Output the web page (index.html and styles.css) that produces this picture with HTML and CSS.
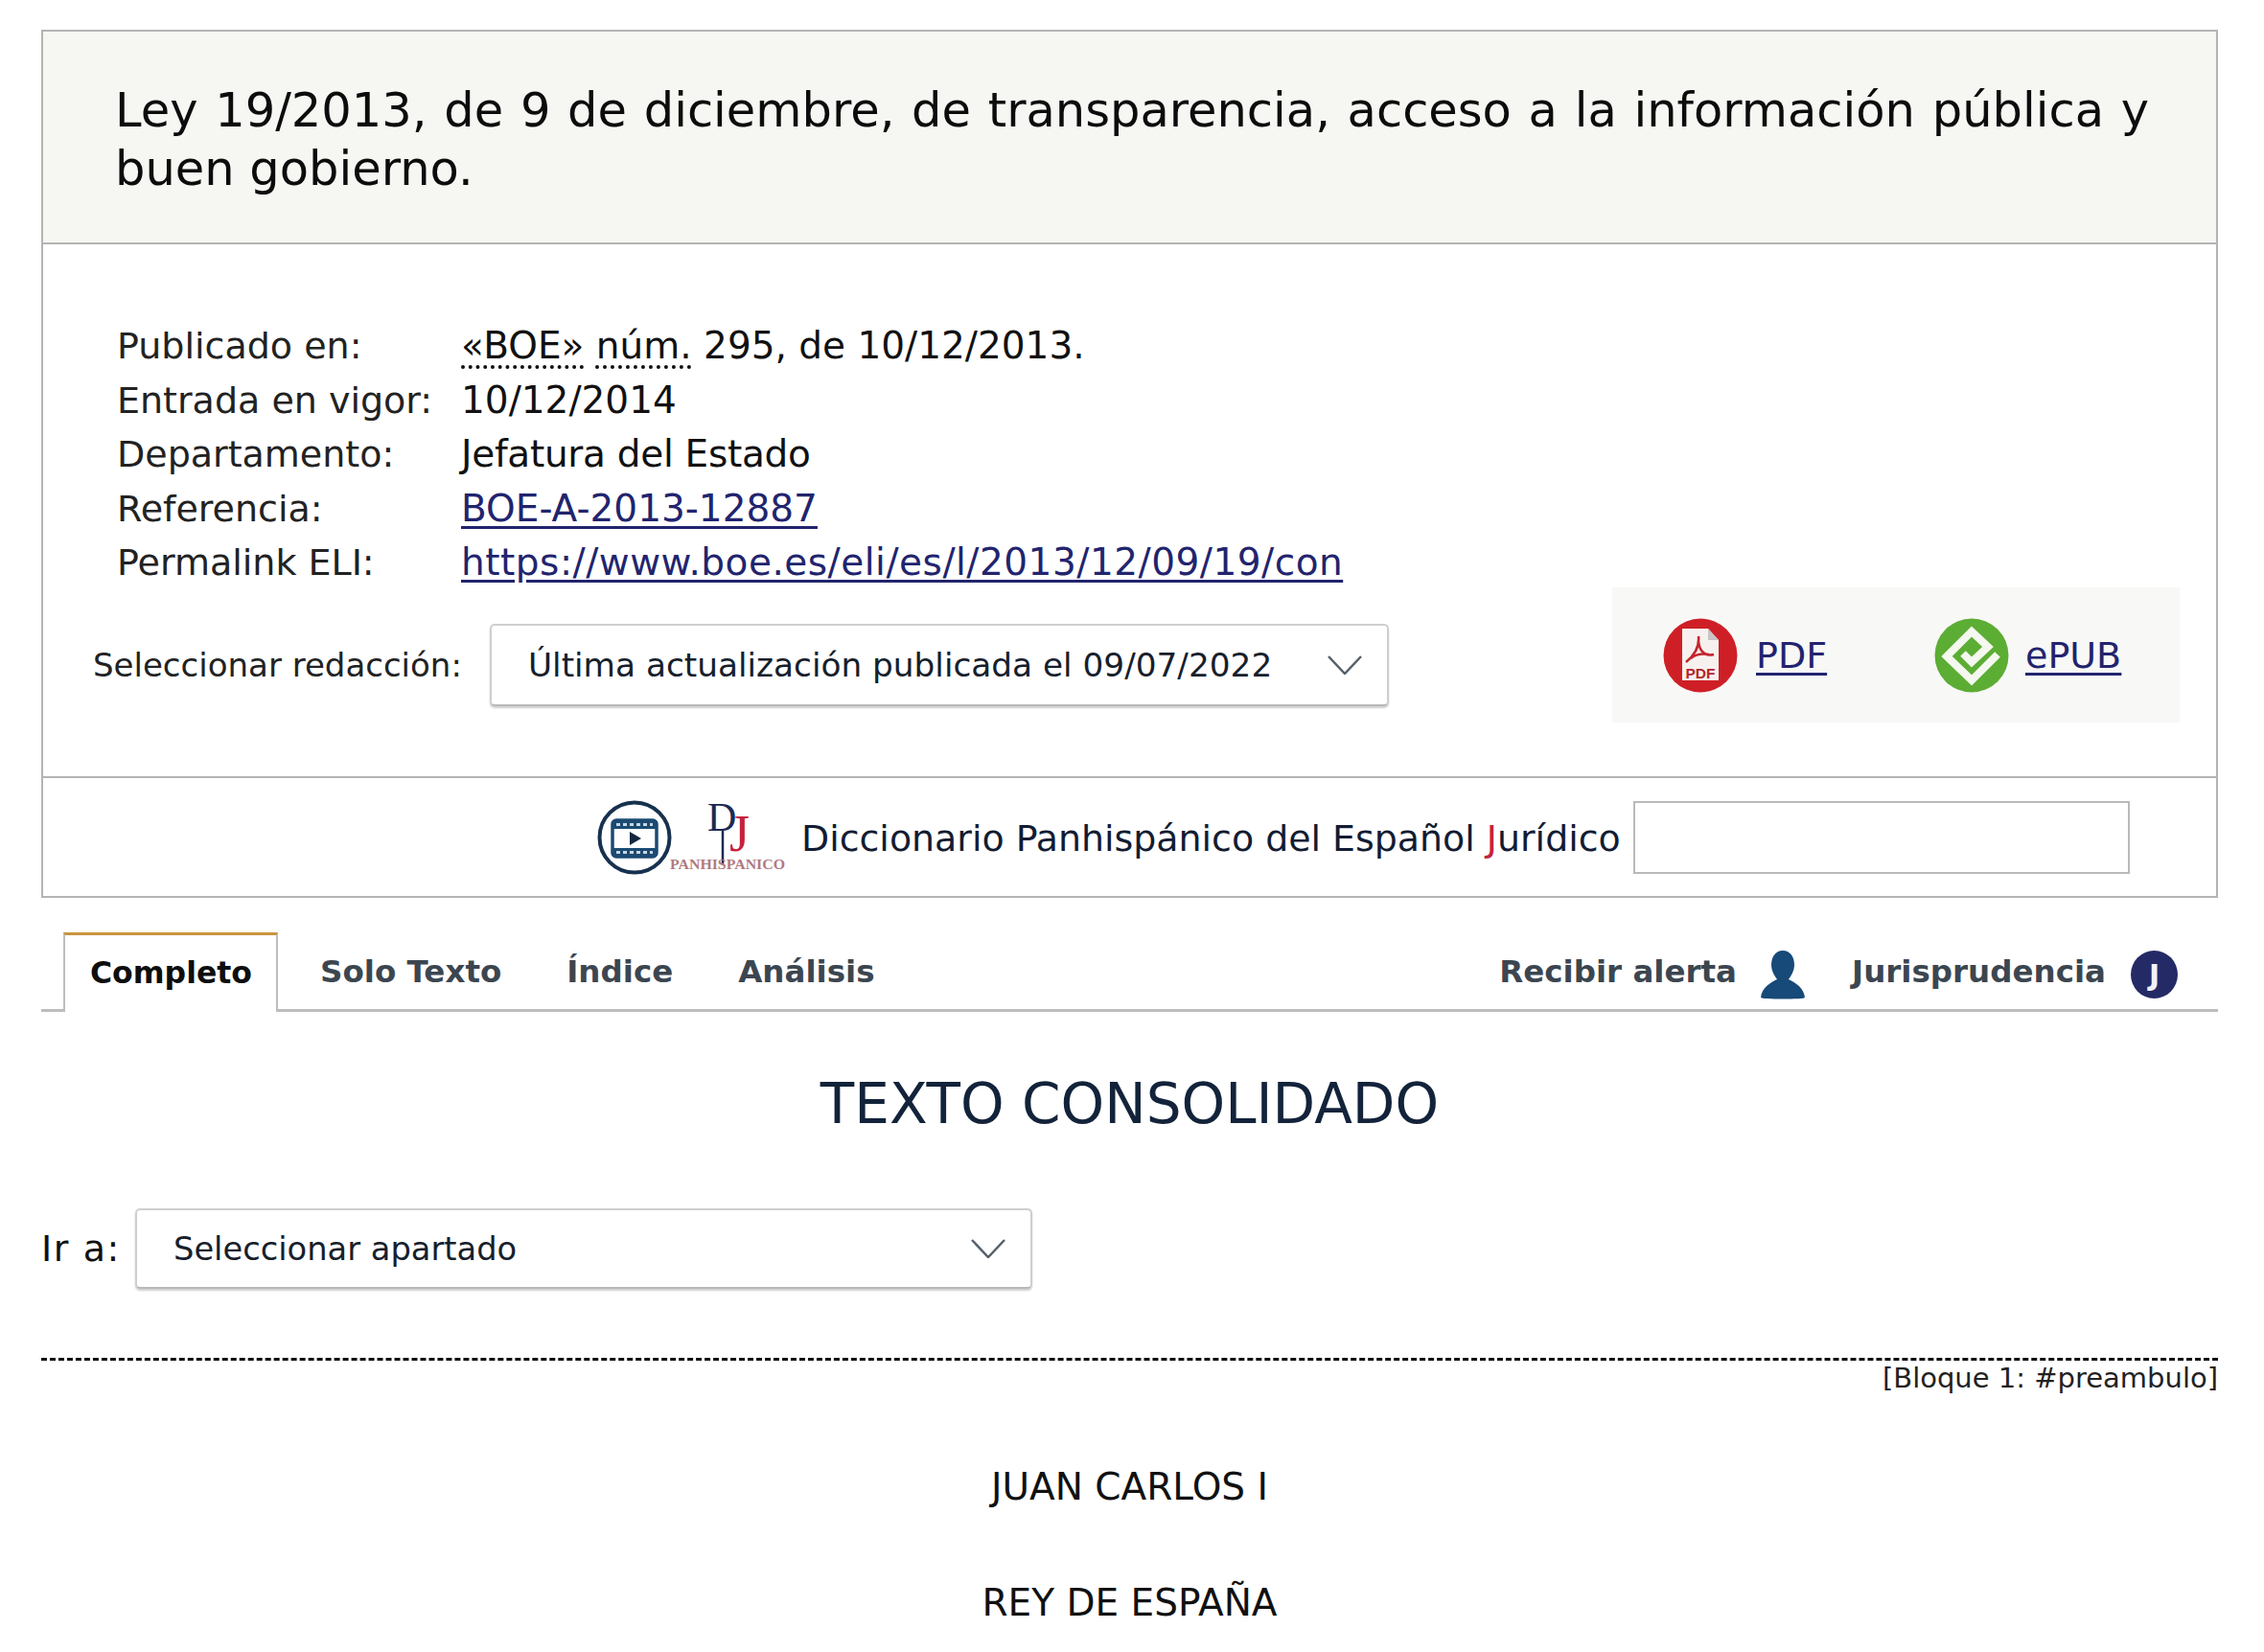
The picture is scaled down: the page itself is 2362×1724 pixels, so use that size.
FILE: index.html
```html
<!DOCTYPE html>
<html lang="es">
<head>
<meta charset="utf-8">
<title>Ley 19/2013</title>
<link rel="stylesheet" href="styles.css">
</head>
<body>
<main class="page">
  <section class="doc">
    <header class="doc-head">
      <h1 class="doc-title">Ley 19/2013, de 9 de diciembre, de transparencia, acceso a la información pública y buen gobierno.</h1>
    </header>
    <div class="doc-body">
      <dl class="meta">
        <dt>Publicado en:</dt><dd><abbr>«BOE»</abbr> <abbr>núm.</abbr> 295, de 10/12/2013.</dd>
        <dt>Entrada en vigor:</dt><dd>10/12/2014</dd>
        <dt>Departamento:</dt><dd class="tight">Jefatura del Estado</dd>
        <dt>Referencia:</dt><dd><a href="#">BOE-A-2013-12887</a></dd>
        <dt>Permalink ELI:</dt><dd><a class="url" href="#">https://www.boe.es/eli/es/l/2013/12/09/19/con</a></dd>
      </dl>
      <div class="version-row">
        <span class="version-label">Seleccionar redacción:</span>
        <div class="select select-version">
          <span>Última actualización publicada el 09/07/2022</span>
          <svg class="chev" viewBox="0 0 36 20"><path d="M1 1 L18 19 L35 1"/></svg>
        </div>
        <div class="downloads">
          <a class="dl dl-pdf" href="#">
            <svg class="dl-icon" viewBox="0 0 78 78">
              <circle cx="39" cy="39" r="38.500" fill="#cf1f26"/>
              <path d="M20 11 H47 L58 23 V65 H20 Z" fill="#f6f1ef"/>
              <path d="M47 11 V23 H58 Z" fill="#c9c4c4"/>
              <path d="M37 19 C38 28 34 38 24 46 M37 24 C38 36 45 40 53 38 M29 42 C35 37 42 37 48 38" fill="none" stroke="#c4242b" stroke-width="2.600"/>
              <text x="39" y="63" class="pdf-mark">PDF</text>
            </svg>
            <span>PDF</span>
          </a>
          <a class="dl dl-epub" href="#">
            <svg class="dl-icon" viewBox="0 0 78 78">
              <circle cx="39" cy="39" r="38.500" fill="#5cad33"/>
              <path d="M66 38 L39 65 L13 40 L39 14 L56 30 L39 46 L30 37" fill="none" stroke="#f4f8ef" stroke-width="8"/>
            </svg>
            <span>ePUB</span>
          </a>
        </div>
      </div>
    </div>
    <div class="dict">
      <svg class="video-icon" viewBox="0 0 78 78">
        <circle cx="39" cy="39" r="36.500" fill="none" stroke="#17324f" stroke-width="4"/>
        <rect x="16" y="21" width="46" height="38" rx="4" fill="none" stroke="#1b4a73" stroke-width="3.500"/>
        <rect x="16" y="21" width="46" height="9" fill="#1b4a73"/>
        <rect x="16" y="50" width="46" height="9" fill="#1b4a73"/>
        <path d="M20 25.500 H58 M20 54.500 H58" stroke="#c8d6e2" stroke-width="3" stroke-dasharray="4 3"/>
        <path d="M34 33 L46 40 L34 47 Z" fill="#14283f"/>
      </svg>
      <svg class="dpej" viewBox="0 0 124 78">
        <text x="39" y="32" class="dpej-d">D</text>
        <path d="M55 30 V66" stroke="#1c2a52" stroke-width="2.500"/>
        <text x="62" y="53" class="dpej-j">J</text>
        <text x="0" y="72" class="dpej-name" textLength="120" lengthAdjust="spacingAndGlyphs">PANHISPANICO</text>
      </svg>
      <span class="dict-label">Diccionario Panhispánico del Español <span class="red">J</span>urídico</span>
      <div class="dict-input"></div>
    </div>
  </section>

  <nav class="tabs">
    <a class="tab tab-on" href="#">Completo</a>
    <a class="tab" href="#">Solo Texto</a>
    <a class="tab" href="#">Índice</a>
    <a class="tab" href="#">Análisis</a>
    <div class="tab-tools">
      <a class="tool" href="#">Recibir alerta
        <svg class="tool-person" viewBox="0 0 48 52"><path d="M24 1 C32 1 36 8 36 16 C36 23 32 28 30 31 C38 35 46 40 47 50 C47 52 1 52 1 50 C2 40 10 35 18 31 C16 28 12 23 12 16 C12 8 16 1 24 1 Z" fill="#174a78"/></svg>
      </a>
      <a class="tool" href="#">Jurisprudencia
        <span class="tool-j">J</span>
      </a>
    </div>
  </nav>

  <h2 class="consol">TEXTO CONSOLIDADO</h2>

  <div class="goto">
    <span class="goto-label">Ir a:</span>
    <div class="select select-goto">
      <span>Seleccionar apartado</span>
      <svg class="chev" viewBox="0 0 36 20"><path d="M1 1 L18 19 L35 1"/></svg>
    </div>
  </div>

  <div class="block-rule">[Bloque 1: #preambulo]</div>
  <p class="center first">JUAN CARLOS I</p>
  <p class="center">REY DE ESPAÑA</p>
</main>
</body>
</html>
```
FILE: styles.css
```css
* { box-sizing: border-box; }
html, body { margin: 0; background: #fff; }
body { font-family: "DejaVu Sans", Verdana, sans-serif; color: #111; height: 1724px; overflow: hidden; }
a { color: #22246e; }
.page { padding: 31px 48px 0 43px; }

.doc { border: 2px solid #b4b4b4; }
.doc-head { height: 222px; background: #f6f6f3; border-bottom: 2px solid #b4b4b4; padding: 52px 70px 0 75px; }
.doc-title { margin: 0; font-size: 49.500px; line-height: 61px; font-weight: 400; color: #0c0c0c; text-align: justify; }

.doc-body { height: 557px; padding: 78px 38px 0 0; border-bottom: 2px solid #b4b4b4; }
.meta { margin: 0 0 0 77px; display: grid; grid-template-columns: 359px 1fr; font-size: 39px; line-height: 56.500px; align-items: baseline; }
.meta dt { color: #222; font-size: 38px; }
.meta dd { margin: 0; }
.meta .tight { letter-spacing: -0.300px; }
.meta abbr { text-decoration: underline dotted #111 4px; text-underline-offset: 7px; }
.meta a { text-underline-offset: 5px; }
.meta .url { letter-spacing: 0.500px; }

.version-row { display: flex; align-items: flex-start; margin-top: 20px; padding-left: 52px; }
.version-label { font-size: 34px; line-height: 86px; margin-top: 15px; width: 414px; color: #222; flex: none; }
.select { display: flex; align-items: center; justify-content: space-between; background: #fff; border: 2px solid #cfcfcf; border-bottom-color: #b9b9b9; border-radius: 5px; box-shadow: 0 2px 2px #cfcfcf; color: #16202c; }
.select-version { width: 938px; height: 86px; margin-top: 15px; padding: 0 26px 0 38px; flex: none; font-size: 34.300px; }
.chev { width: 36px; height: 20px; fill: none; stroke: #55606a; stroke-width: 2.500px; flex: none; }

.downloads { margin-left: auto; margin-top: -23px; width: 592px; height: 141px; background: #f8f8f7; display: flex; align-items: center; padding: 2px 0 0 53px; flex: none; }
.dl { display: flex; align-items: center; font-size: 38px; text-underline-offset: 5px; }
.dl-pdf { width: 283px; }
.dl-icon { width: 78px; height: 78px; margin-right: 19px; flex: none; }
.dl-epub .dl-icon { margin-right: 17px; }
.dl-icon + span { text-decoration: underline; }
.pdf-mark { font-family: "Liberation Sans", sans-serif; font-size: 15.500px; font-weight: 700; fill: #b3262d; text-anchor: middle; }

.dict { height: 123px; display: flex; align-items: center; padding-left: 578px; }
.video-icon { width: 78px; height: 78px; flex: none; }
.dpej { width: 124px; height: 78px; margin-left: -2px; flex: none; overflow: visible; font-family: "Liberation Serif", serif; }
.dpej-d { font-size: 42px; fill: #1c2a52; }
.dpej-j { font-size: 54px; fill: #c6213d; }
.dpej-name { font-size: 14.500px; font-weight: 700; fill: #b07a80; }
.dict-label { margin-left: 13px; padding-top: 2px; font-size: 37.900px; color: #131c33; white-space: nowrap; }
.red { color: #c6213d; }
.dict-input { width: 518px; height: 76px; margin-left: auto; margin-right: 90px; border: 2px solid #b9b9b9; background: #fff; flex: none; }

.tabs { margin-top: 36px; height: 83px; border-bottom: 3px solid #bdbdbd; display: flex; align-items: stretch; padding-left: 23px; font-size: 32.500px; font-weight: 700; }
.tab { color: #3c4650; text-decoration: none; display: flex; align-items: center; padding: 2px 34px 0; height: 80px; }
.tab-on { color: #0e0e0e; background: #fff; height: 83px; width: 224px; padding: 0 0 3px 26px; margin-right: 10px; border: 2px solid #bdbdbd; border-top: 3px solid #c9953f; border-bottom: 0; flex: none; font-size: 31.500px; }
.tab-tools { margin-left: auto; display: flex; align-items: center; padding: 2px 42px 0 0; height: 80px; }
.tool { color: #3c4650; text-decoration: none; display: flex; align-items: center; }
.tool + .tool { margin-left: 48px; }
.tool-person { width: 48px; height: 52px; margin: 6px 0 0 24px; }
.tool-j { width: 49px; height: 50px; border-radius: 50%; margin: 6px 0 0 26px; background: #232a66; color: #f0f2fa; display: flex; align-items: center; justify-content: center; font-size: 30px; font-weight: 700; }

.consol { margin: 61px 0 0; text-align: center; font-size: 58px; line-height: 70px; font-weight: 400; color: #12233a; }

.goto { display: flex; align-items: center; margin-top: 74px; }
.goto-label { font-size: 38px; letter-spacing: 1.600px; width: 98px; flex: none; color: #111; }
.select-goto { width: 936px; height: 84px; padding: 0 26px 0 38px; font-size: 33.700px; }

.block-rule { margin-top: 72px; border-top: 3px dashed #111; font-size: 29px; line-height: 36px; text-align: right; color: #222; }

.center { margin: 0; text-align: center; font-size: 39px; line-height: 46px; color: #111; }
.first { margin-top: 73px; }
.center + .center { margin-top: 75px; }
```
